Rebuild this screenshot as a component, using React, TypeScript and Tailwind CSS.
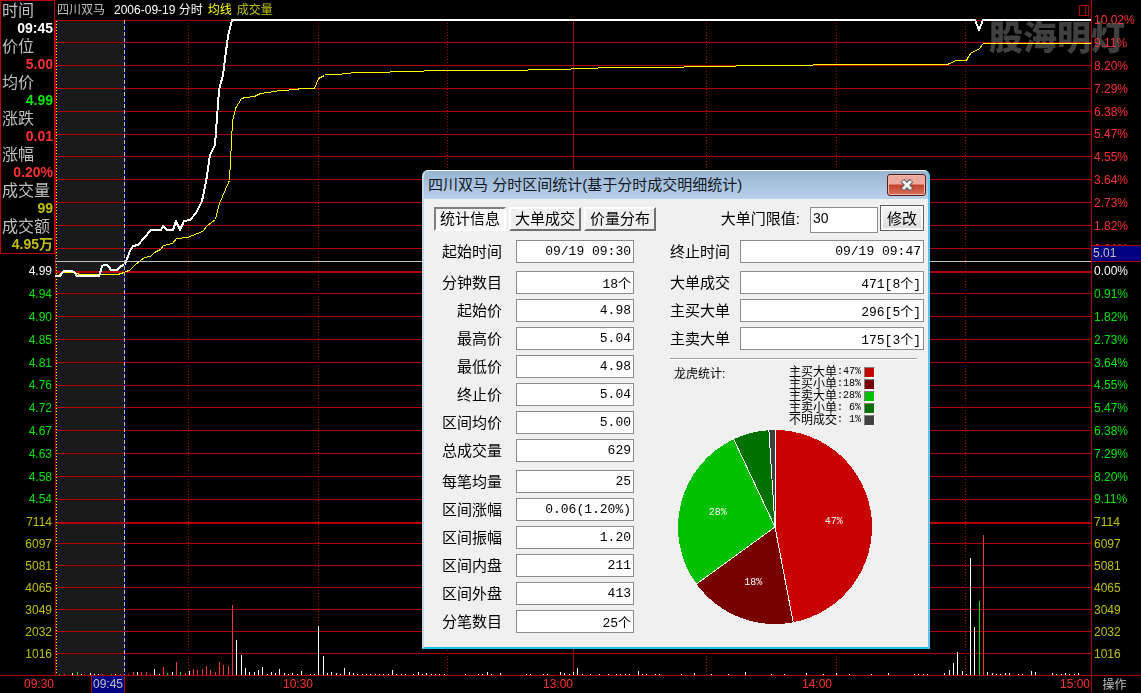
import { useState } from 'react';

interface Quote {
  label: string;
  value: string;
  color: string;
}

interface Stat {
  label: string;
  value: string;
}

interface Slice {
  label: string;
  percent: number;
  fill: string;
  swatch: string;
}

const quotes: Quote[] = [
  { label: '时间', value: '09:45', color: 'text-white' },
  { label: '价位', value: '5.00', color: 'text-[#ff3232]' },
  { label: '均价', value: '4.99', color: 'text-[#00e600]' },
  { label: '涨跌', value: '0.01', color: 'text-[#ff3232]' },
  { label: '涨幅', value: '0.20%', color: 'text-[#ff3232]' },
  { label: '成交量', value: '99', color: 'text-[#c0c000]' },
  { label: '成交额', value: '4.95万', color: 'text-[#c0c000]' }
];

// The upper half of the left axis sits behind the quote panel
const leftPrices = ['', '', '', '', '', '', '', '', '', '', '', '4.99', '4.94', '4.90', '4.85', '4.81', '4.76', '4.72', '4.67', '4.63', '4.58', '4.54'];
const rightPercents = ['10.02%', '9.11%', '8.20%', '7.29%', '6.38%', '5.47%', '4.55%', '3.64%', '2.73%', '1.82%', '0.91%', '0.00%', '0.91%', '1.82%', '2.73%', '3.64%', '4.55%', '5.47%', '6.38%', '7.29%', '8.20%', '9.11%'];
const volumes = ['7114', '6097', '5081', '4065', '3049', '2032', '1016'];

const gridRows = [20, 42, 65, 88, 111, 134, 156, 179, 202, 225, 248, 293, 316, 339, 362, 385, 407, 430, 453, 476, 499, 543, 565, 587, 609, 631, 653];
const thickRows = [272, 523];
const dottedCols = [188, 318, 447, 706, 836, 965];

const priceLine =
  '55,276 60,276 62,273 64,271 72,271 75,273 77,276 99,276 101,270 102,266 104,265 107,265 109,267 111,270 117,270 120,267 123,265 125,264 127,259 130,251 133,246 138,245 151,230 161,230 163,226 167,230 173,230 176,221 180,230 184,221 190,220 196,213 202,201 206,182 210,155 215,145 218,104 219,90 223,75 228,36 232,20 975,20 979,30 983,20 1091,20';
const averageLine =
  '56,275 61,274 63,272 72,272 76,273 80,274 117,274 121,273 125,271 129,270 134,265 140,260 144,257 150,256 154,252 160,249 163,245 172,243 176,238 187,237 202,231 207,225 215,219 219,203 225,189 229,180 232,121 235,108 241,98 245,97 254,96 260,93 268,92 280,90 297,89 299,88 314,88 316,83 318,78 324,75 325,74 341,74 342,73 350,73 351,72 389,72 390,71 423,71 424,70 527,70 528,69 570,69 571,68 597,68 598,67 683,67 684,66 735,66 736,65 812,65 813,64 947,64 956,60 966,60 968,56 971,52 978,49 983,43 1091,43';

// x,height pairs for each minute
const upBars = '64,1 102,1 120,1 128,1 133,3 141,3 146,3 150,1 163,8 176,13 185,2 193,6 197,5 202,6 206,9 210,5 215,3 219,13 223,10 228,9 232,70 983,140';
const downBars = '59,1 77,3 111,1 167,2 180,3 979,74';
const flatBars =
  '72,2 81,1 90,2 94,1 98,1 115,1 137,3 154,6 159,1 172,3 189,4 236,35 241,20 245,7 249,3 254,3 258,5 262,8 267,1 271,3 275,2 279,6 284,2 288,1 292,2 297,1 301,4 310,1 314,1 318,49 323,19 327,2 331,3 336,2 340,1 344,7 349,3 353,2 357,1 362,1 366,1 370,1 375,1 379,1 383,1 388,1 392,5 396,1 401,1 405,1 413,1 418,3 422,1 426,2 431,1 435,1 439,1 444,1 465,1 478,1 482,1 487,3 491,1 500,2 526,1 530,1 543,1 547,1 560,3 564,2 569,1 573,3 577,7 582,1 590,1 599,1 608,1 616,1 620,1 625,1 629,1 638,4 642,1 646,1 655,1 659,1 681,1 694,2 711,1 728,1 745,3 771,1 784,1 806,2 823,1 836,2 849,1 871,1 888,2 914,1 918,1 923,1 927,1 944,2 949,5 953,12 957,23 962,4 966,1 970,117 974,48 987,3 992,2 996,1 1000,1 1005,2 1009,2 1018,1 1022,1 1031,4 1035,3 1052,2 1056,1 1061,1 1065,2 1069,1 1074,1 1078,2 1091,5';

const statGroups: Stat[][] = [
  [{ label: '起始时间', value: '09/19 09:30' }],
  [
    { label: '分钟数目', value: '18个' },
    { label: '起始价', value: '4.98' },
    { label: '最高价', value: '5.04' },
    { label: '最低价', value: '4.98' },
    { label: '终止价', value: '5.04' },
    { label: '区间均价', value: '5.00' },
    { label: '总成交量', value: '629' }
  ],
  [
    { label: '每笔均量', value: '25' },
    { label: '区间涨幅', value: '0.06(1.20%)' },
    { label: '区间振幅', value: '1.20' },
    { label: '区间内盘', value: '211' },
    { label: '区间外盘', value: '413' },
    { label: '分笔数目', value: '25个' }
  ]
];

const orderGroups: Stat[][] = [
  [{ label: '终止时间', value: '09/19 09:47' }],
  [
    { label: '大单成交', value: '471[8个]' },
    { label: '主买大单', value: '296[5个]' },
    { label: '主卖大单', value: '175[3个]' }
  ]
];

const slices: Slice[] = [
  { label: '主买大单', percent: 47, fill: '#c80000', swatch: 'bg-[#c80000]' },
  { label: '主买小单', percent: 18, fill: '#780000', swatch: 'bg-[#780000]' },
  { label: '主卖大单', percent: 28, fill: '#00c000', swatch: 'bg-[#00c000]' },
  { label: '主卖小单', percent: 6, fill: '#007000', swatch: 'bg-[#007000]' },
  { label: '不明成交', percent: 1, fill: '#404040', swatch: 'bg-[#404040]' }
];

const tabs = ['统计信息', '大单成交', '价量分布'];

function QuotePanel() {
  return (
    <dl className="absolute left-0 top-0 w-[55px] border border-[#c00000] bg-black">
      {quotes.map(quote => (
        <div key={quote.label}>
          <dt className="h-[18px] pl-px text-base leading-5 text-[#c0c0c0]">{quote.label}</dt>
          <dd className={`h-[18px] pr-px text-right text-sm leading-[18px] font-bold whitespace-nowrap ${quote.color}`}>{quote.value}</dd>
        </div>
      ))}
    </dl>
  );
}

function Axis({ prices, align }: { prices: string[]; align: string }) {
  const priceColor = (index: number) => {
    if (index < 11) return 'text-[#ff3232]';
    return index === 11 ? 'text-white' : 'text-[#00e600]';
  };

  return (
    <div className={`flex h-full flex-col pt-[9px] pb-[10px] text-xs leading-none ${align}`}>
      <div className="flex min-h-0 flex-[502] flex-col">
        {prices.map((price, index) => (
          <div key={index} className={`flex min-h-0 flex-1 items-center ${priceColor(index)}`}>
            <span className="w-full">{price}</span>
          </div>
        ))}
      </div>
      <div className="flex min-h-0 flex-[154] flex-col text-[#c0c000]">
        {volumes.map(volume => (
          <div key={volume} className="flex min-h-0 flex-1 items-center">
            <span className="w-full">{volume}</span>
          </div>
        ))}
      </div>
    </div>
  );
}

function Bars({ data, fill }: { data: string; fill: string }) {
  return (
    <g fill={fill}>
      {data.split(' ').map(pair => {
        const [x, height] = pair.split(',').map(Number);
        return <rect key={x} x={x} y={675 - height} width={1} height={height} />;
      })}
    </g>
  );
}

function TimeChart() {
  return (
    <svg viewBox="55 20 1036 655" preserveAspectRatio="none" shapeRendering="crispEdges" className="min-h-0 w-full flex-1 overflow-visible">
      <rect x={56} y={20} width={68} height={655} fill="#1a1a1a" />
      <g fill="#b00000">
        {gridRows.map(y => <rect key={y} x={55} y={y} width={1036} height={1} />)}
        {thickRows.map(y => <rect key={y} x={55} y={y - 1} width={1036} height={2} />)}
        <rect x={55} y={20} width={1} height={655} />
        <rect x={573} y={20} width={1} height={655} />
      </g>
      {dottedCols.map(x => (
        <line key={x} x1={x + 0.5} x2={x + 0.5} y1={23} y2={675} stroke="#b00000" strokeDasharray="1 2" />
      ))}
      <line x1={56.5} x2={56.5} y1={21} y2={675} stroke="#ffff00" strokeDasharray="1 2" />
      <Bars data={upBars} fill="#ff3232" />
      <Bars data={downBars} fill="#00e600" />
      <Bars data={flatBars} fill="#ffffff" />
      <polyline points={averageLine} fill="none" stroke="#ffff00" transform="translate(0.5 0.5)" />
      <polyline points={priceLine} fill="none" stroke="#ffffff" strokeWidth={2} strokeLinejoin="round" />
      {/* Crosshair */}
      <rect x={55} y={261} width={1036} height={1} fill="#c0c0c0" />
      <rect x={124} y={20} width={1} height={655} fill="#0000c0" />
      <line x1={124.5} x2={124.5} y1={20} y2={675} stroke="#c0c0c0" strokeDasharray="4 2" />
    </svg>
  );
}

function StatFields({ groups, labelClass, inputClass, prefix }: { groups: Stat[][]; labelClass: string; inputClass: string; prefix: string }) {
  return (
    <div className="flex flex-col gap-2">
      {groups.map((group, groupIndex) => (
        <div key={groupIndex} className="flex flex-col gap-[5px]">
          {group.map(stat => (
            <div key={stat.label} className="flex items-center">
              <label htmlFor={`${prefix}-${stat.label}`} className={`shrink-0 text-[15px] leading-[23px] ${labelClass}`}>{stat.label}</label>
              <input
                id={`${prefix}-${stat.label}`}
                readOnly
                value={stat.value}
                className={`h-[23px] min-w-0 border border-[#8c8c8c] bg-white px-[2px] text-right font-['Liberation_Mono','Noto_Sans_CJK_SC',monospace] text-[13px] ${inputClass}`}
              />
            </div>
          ))}
        </div>
      ))}
    </div>
  );
}

function PieChart() {
  const center = 98;
  const radius = 97;
  const point = (percent: number, r: number) => {
    const angle = (percent / 100) * Math.PI * 2;
    return { x: center + r * Math.sin(angle), y: center - r * Math.cos(angle) };
  };

  let total = 0;
  const parts = slices.map(slice => {
    const start = point(total, radius);
    const middle = point(total + slice.percent / 2, 59);
    total += slice.percent;
    const end = point(total, radius);
    return { ...slice, start, middle, end };
  });

  return (
    <svg viewBox="0 0 196 196" className="mt-[3px] ml-[7px] h-[196px] w-[196px]">
      {parts.map(part => (
        <path
          key={part.label}
          d={`M${center} ${center}L${part.start.x} ${part.start.y}A${radius} ${radius} 0 0 1 ${part.end.x} ${part.end.y}Z`}
          fill={part.fill}
          shapeRendering="crispEdges"
        />
      ))}
      {parts.map(part => (
        <line key={part.label} x1={center} y1={center} x2={part.start.x} y2={part.start.y} stroke="#ffffff" shapeRendering="crispEdges" />
      ))}
      {parts.filter(part => part.percent > 10).map(part => (
        <text key={part.label} x={part.middle.x} y={part.middle.y + 3} textAnchor="middle" fill="#ffffff" className="font-['Liberation_Mono',monospace] text-[10px]">
          {part.percent}%
        </text>
      ))}
    </svg>
  );
}

function StatsDialog({ onClose }: { onClose: () => void }) {
  const [activeTab, setActiveTab] = useState(tabs[0]);
  const [threshold, setThreshold] = useState('30');

  return (
    <section
      role="dialog"
      aria-labelledby="stats-title"
      className="absolute left-[422px] top-[170px] w-[508px] overflow-hidden rounded-t-md border-2 border-t border-t-white border-r-[#5cc4ee] border-b-[#1cc4ec] border-l-[#c4d8ee] bg-[#f0f0f0] text-black"
    >
      <header className="flex h-7 items-center justify-between bg-linear-to-b from-[#99b4d1] to-[#b9d1ea] pl-1 pr-0.5">
        <h1 id="stats-title" className="text-[15px] whitespace-nowrap text-[#101828]">四川双马 分时区间统计(基于分时成交明细统计)</h1>
        <button
          aria-label="关闭"
          onClick={onClose}
          className="flex h-[22px] w-[39px] items-center justify-center rounded-[3px] border border-[#5a1a1a] bg-linear-to-b from-[#eba99b] from-45% via-[#c0432c] via-50% to-[#d9705c] shadow-[inset_0_0_0_1px_#f0b8ac]"
        >
          <svg viewBox="0 0 14 12" className="h-3 w-[14px]">
            <path d="M2.5 1.5L11.5 10.5M11.5 1.5L2.5 10.5" stroke="#5a5a68" strokeWidth="5" />
            <path d="M3 2L11 10M11 2L3 10" stroke="#f4f4f4" strokeWidth="3" />
          </svg>
        </button>
      </header>

      <div className="pt-1.5 pr-1 pb-[14px] pl-[10px]">
        <div className="flex h-7 items-center">
          <div role="tablist" className="flex gap-[3px]">
            {tabs.map(tab => (
              <button
                key={tab}
                role="tab"
                aria-selected={tab === activeTab}
                onClick={() => setActiveTab(tab)}
                className={`h-6 w-[72px] border-2 text-[15px] leading-5 whitespace-nowrap ${
                  tab === activeTab
                    ? 'border-t-[#808080] border-r-white border-b-white border-l-[#808080] bg-[#f8f8f8]'
                    : 'border-t-white border-r-[#707070] border-b-[#707070] border-l-white bg-[#f0f0f0]'
                }`}
              >
                {tab}
              </button>
            ))}
          </div>
          <label htmlFor="threshold" className="ml-auto pr-[10px] text-[15px]">大单门限值:</label>
          <input
            id="threshold"
            value={threshold}
            onChange={e => setThreshold(e.target.value)}
            className="h-[26px] w-[68px] self-end border border-[#8c8c8c] bg-white px-[2px] pb-1 text-sm leading-none"
          />
          <button className="ml-0.5 h-[26px] w-11 self-start border border-[#606060] bg-linear-to-b from-[#f4f4f4] to-[#dcdcdc] text-[15px] leading-none shadow-[inset_0_0_0_2px_#fafafa]">修改</button>
        </div>

        <div className="mt-[7px] flex gap-9">
          <StatFields groups={statGroups} prefix="range" labelClass="w-[82px] pr-[14px] text-right" inputClass="w-[118px]" />
          <div className="min-w-0 flex-1">
            <StatFields groups={orderGroups} prefix="order" labelClass="w-[70px]" inputClass="flex-1" />
            <hr className="mt-2 mr-[7px] h-0.5 border-t border-b border-t-[#a0a0a0] border-b-white" />
            <div className="mt-1.5 mr-[49px] ml-1 flex items-start justify-between text-xs">
              <h2 className="leading-4">龙虎统计:</h2>
              <ul>
                {slices.map(slice => (
                  <li key={slice.label} className="flex h-3 items-center leading-3">
                    <span>{slice.label}</span>
                    <span className="w-6 text-right font-['Liberation_Mono',monospace] text-[10px] whitespace-pre">:{String(slice.percent).padStart(2)}%</span>
                    <span className={`ml-[3px] h-[11px] w-[11px] border border-t-[#808080] border-r-white border-b-white border-l-[#808080] ${slice.swatch}`}></span>
                  </li>
                ))}
              </ul>
            </div>
            <PieChart />
          </div>
        </div>
      </div>
    </section>
  );
}

export default function App() {
  const [showStats, setShowStats] = useState(true);

  return (
    <main className="relative flex h-screen min-h-[660px] flex-col overflow-hidden bg-black font-['Liberation_Sans','Noto_Sans_CJK_SC',sans-serif]">
      <div className="flex min-h-0 flex-1">
        <aside className="relative w-[55px] shrink-0">
          <Axis prices={leftPrices} align="pr-[3px] text-right" />
          <QuotePanel />
        </aside>

        <div className="flex min-w-0 flex-1 flex-col">
          <header className="flex h-5 items-center px-0.5 text-xs leading-5">
            <span className="text-[#c0c0c0]">四川双马</span>
            <span className="ml-[9px] text-white">2006-09-19 分时</span>
            <span className="ml-[5px] text-[#ffff00]">均线</span>
            <span className="ml-[5px] text-[#c0c000]">成交量</span>
            <svg viewBox="0 0 10 11" className="ml-auto h-[11px] w-[10px]" shapeRendering="crispEdges">
              <path d="M0.5 0.5H9.5V10.5H0.5ZM6.5 0.5V10.5" fill="none" stroke="#b00000" />
            </svg>
          </header>
          <TimeChart />
        </div>

        <aside className="relative w-[50px] shrink-0 border-l border-[#b00000]">
          <Axis prices={rightPercents} align="pl-[2px] text-left" />
          <div className="absolute top-[245px] right-0 left-0 h-[17px] border-y border-[#b00000] bg-[#000080] pl-px text-xs leading-[15px] text-[#c0c0c0]">5.01</div>
        </aside>
      </div>

      <footer className="flex h-[18px] shrink-0 border-t border-[#b00000] text-xs leading-4 text-[#ff3232]">
        <div className="w-[55px] pr-px text-right">09:30</div>
        <div className="grid flex-1 grid-cols-4 text-right">
          <div className="flex justify-between pr-px">
            <span className="ml-9 w-[34px] border-x border-[#b00000] bg-[#000080] text-center text-[#c0c0c0]">09:45</span>
            <span>10:30</span>
          </div>
          <span>13:00</span>
          <span>14:00</span>
          <span className="pr-px">15:00</span>
        </div>
        <button className="w-[50px] border-l border-[#b00000] pr-1 text-center text-[#c0c0c0]">操作</button>
      </footer>

      <div className="pointer-events-none absolute top-[18px] right-4 text-[34px] leading-[40px] font-black text-[#404040] mix-blend-lighten">股海明灯</div>

      {showStats && <StatsDialog onClose={() => setShowStats(false)} />}
    </main>
  );
}
